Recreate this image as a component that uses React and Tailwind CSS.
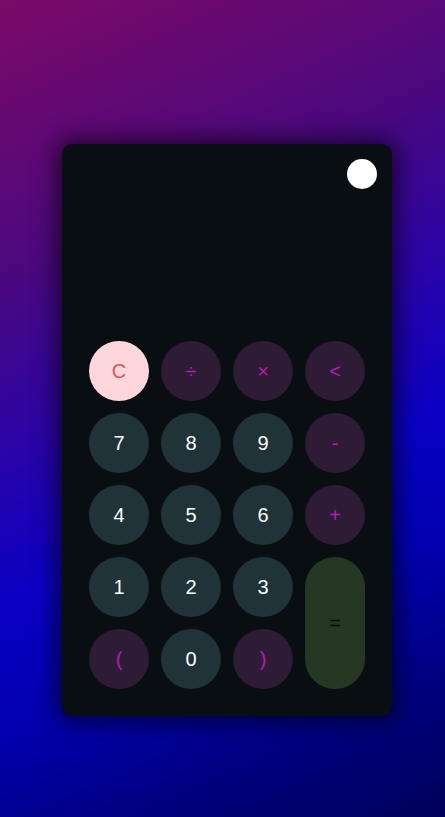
export default function App() {
  const num = "bg-[#1f3338] text-white";
  const op = "bg-[#2e1b35] text-[#b51cb5]";
  const btn = "w-[60px] h-[60px] rounded-full flex items-center justify-center text-[20px]";
  return (
    <div
      className="w-[445px] h-[817px] flex items-center justify-center"
      style={{
        fontFamily: '"Liberation Sans", Arial, sans-serif',
        background:
          "linear-gradient(156deg, #7c0a68 0%, #4a087f 28%, #2a04a8 45%, #0a00c4 60%, #0000b0 72%, #00007a 88%, #00005a 100%)",
      }}
    >
      <div className="w-[330px] h-[572px] mt-[43px] ml-[9px] rounded-[10px] bg-[#090e13] shadow-[0_0_22px_6px_rgba(0,0,0,0.6)] flex flex-col px-[27px] pb-[27px] pt-[15px]">
        <div className="flex justify-end mr-[-12px]">
          <div className="w-[30px] h-[30px] rounded-full bg-white" />
        </div>
        <div className="flex-1" />
        <div className="grid grid-cols-4 gap-[12px]">
          <div className={`${btn} bg-[#ffd6da] text-[#dc5068]`}>C</div>
          <div className={`${btn} ${op}`}>÷</div>
          <div className={`${btn} ${op}`}>×</div>
          <div className={`${btn} ${op}`}>&lt;</div>
          <div className={`${btn} ${num}`}>7</div>
          <div className={`${btn} ${num}`}>8</div>
          <div className={`${btn} ${num}`}>9</div>
          <div className={`${btn} ${op}`}>-</div>
          <div className={`${btn} ${num}`}>4</div>
          <div className={`${btn} ${num}`}>5</div>
          <div className={`${btn} ${num}`}>6</div>
          <div className={`${btn} ${op}`}>+</div>
          <div className={`${btn} ${num}`}>1</div>
          <div className={`${btn} ${num}`}>2</div>
          <div className={`${btn} ${num}`}>3</div>
          <div className="row-span-2 w-[60px] h-[132px] rounded-full bg-[#263824] text-[#0a0a0a] flex items-center justify-center text-[20px]">=</div>
          <div className={`${btn} ${op}`}>(</div>
          <div className={`${btn} ${num}`}>0</div>
          <div className={`${btn} ${op}`}>)</div>
        </div>
      </div>
    </div>
  );
}
